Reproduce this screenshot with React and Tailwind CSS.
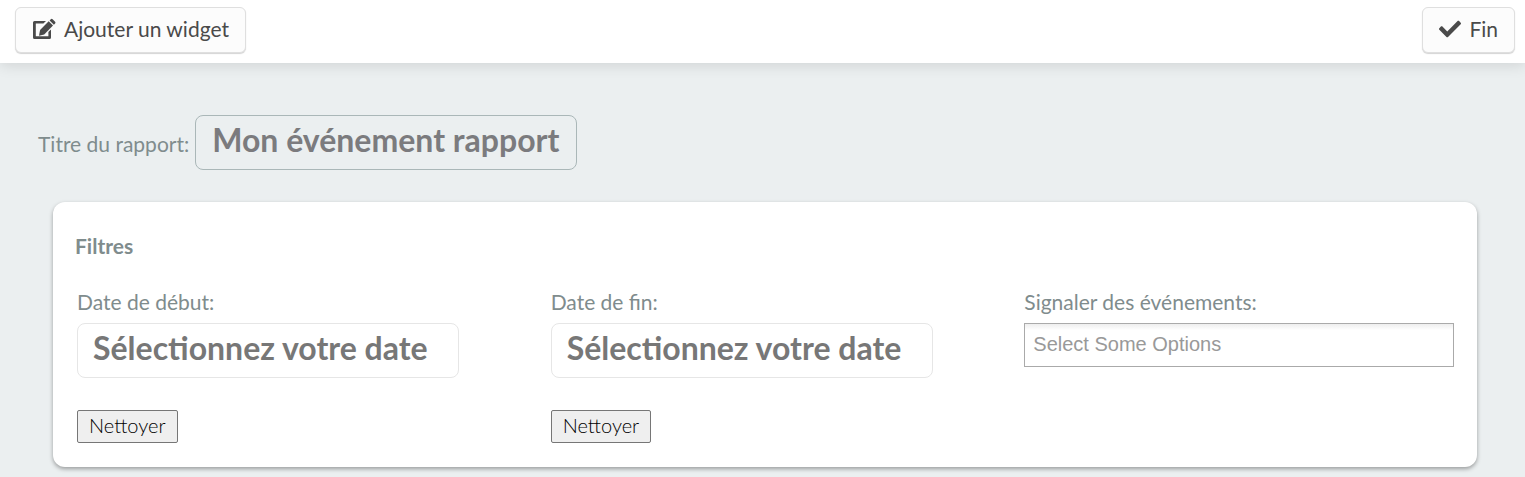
import { useState } from 'react';
import { FaCheck } from 'react-icons/fa';

function EditIcon() {
    return (
        <svg viewBox="0 0 24 22" className="h-[22px] w-6" fill="currentColor" aria-hidden="true">
            <path d="M2.500 3H14l-2.600 2.600H3.800v12.600h12.600v-4.200l2.600-2.600V19.500q0 1.500-1.500 1.500h-15Q1 21 1 19.500v-15Q1 3 2.500 3z" />
            <path d="M16.700 3.300l4.300 4.300-8.800 8.800-5.200 1.300 1.100-5.600z" />
            <path d="M17.600 2.400l1.200-1.200q.9-.9 1.800 0l2.500 2.500q.9.900 0 1.800l-1.200 1.200z" />
        </svg>
    );
}

function ToolbarButton({ icon, children }) {
    return (
        <button
            type="button"
            className="flex h-[46px] items-center gap-2 rounded-md border border-[#dfdfdf] bg-[#fcfcfc] px-4 pb-0.5 text-[21px] text-[#4a4a4a] shadow-[0_1px_1px_#d4d4d4]"
        >
            {icon}
            {children}
        </button>
    );
}

function DateFilter({ id, label }) {
    const [value, setValue] = useState('');

    return (
        <div>
            <label htmlFor={id} className="block leading-[30px]">{label}</label>
            <input
                id={id}
                type="text"
                value={value}
                onChange={(e) => setValue(e.target.value)}
                placeholder="Sélectionnez votre date"
                className="mt-1.5 block h-[55px] w-full max-w-[382px] rounded-lg border border-[#e6e6e6] bg-white px-[15px] pb-1.5 text-[32px] font-bold text-[#777] placeholder:text-[#777]"
            />
            <button
                type="button"
                onClick={() => setValue('')}
                className="mt-8 block h-[33px] rounded-xs border border-[#767676] bg-[#efefef] px-[11px] pb-1.5 text-xl leading-7 font-light text-black"
            >
                Nettoyer
            </button>
        </div>
    );
}

export default function App() {
    const [title, setTitle] = useState('Mon événement rapport');

    return (
        <div className="min-h-screen bg-[#ebeff0] font-['Lato',sans-serif] text-[21px] text-[#7f8c8d]">
            <header className="relative flex items-center justify-between bg-white pt-[7px] pr-[10px] pb-[10px] pl-[15px] shadow-[0_2px_14px_rgba(0,0,0,0.12)]">
                <ToolbarButton icon={<EditIcon />}>Ajouter un widget</ToolbarButton>
                <ToolbarButton icon={<FaCheck className="h-[22px] w-[22px]" />}>Fin</ToolbarButton>
            </header>

            <main className="pt-[52px] pb-[10px]">
                <div className="flex items-center gap-[6px] px-[38px]">
                    <label htmlFor="report-title" className="pt-0.5">Titre du rapport:</label>
                    <input
                        id="report-title"
                        type="text"
                        value={title}
                        onChange={(e) => setTitle(e.target.value)}
                        className="h-[55px] w-[382px] rounded-lg border border-[#aab7b8] bg-transparent px-4 pb-1.5 text-[32px] font-bold text-[#7b7b7e]"
                    />
                </div>

                <section className="mt-8 mr-12 ml-[53px] rounded-xl bg-white pt-7 pb-6 shadow-[0_2px_4px_rgba(0,0,0,0.35)]">
                    <h2 className="px-[22px] leading-8 font-bold">Filtres</h2>
                    <div className="mt-[25px] grid grid-cols-3 gap-11 pr-[23px] pl-6">
                        <DateFilter id="start-date" label="Date de début:" />
                        <DateFilter id="end-date" label="Date de fin:" />
                        <div>
                            <label htmlFor="events" className="block leading-[30px]">Signaler des événements:</label>
                            <input
                                id="events"
                                type="text"
                                placeholder="Select Some Options"
                                className="mt-1.5 block h-11 w-full border border-[#aaa] bg-linear-to-b from-[#eee] to-white to-15% px-2 pb-0.5 font-['Liberation_Sans',sans-serif] text-xl placeholder:text-[#999]"
                            />
                        </div>
                    </div>
                </section>
            </main>
        </div>
    );
}
